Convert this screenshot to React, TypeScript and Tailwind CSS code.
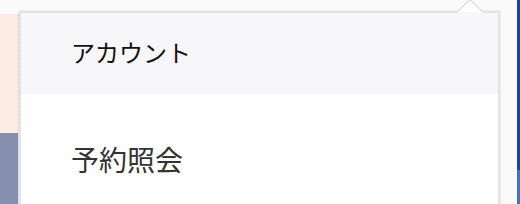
import React from 'react';

const menuItems = ['予約照会'];

export default function App() {
    return (
        <div
            className="relative w-[520px] h-[204px] overflow-hidden bg-[#fafafa]"
            style={{ fontFamily: '"Noto Sans CJK JP", "Noto Sans", sans-serif' }}
        >
            {/* page behind the dropdown */}
            <div className="flex h-full pt-[14px]">
                <div className="flex flex-col w-[19px] border-r border-dotted border-[#e6d8d0]">
                    <div className="h-[119px] bg-[#fcece4]" />
                    <div className="flex-1 bg-[#8890b0]" />
                </div>
                <div className="flex-1" />
                <div className="flex flex-col w-[3px] -mt-[14px]">
                    <div className="flex-1 bg-[#1446b2]" />
                    <div className="h-[34px] bg-[#3f74c2]" />
                </div>
            </div>

            {/* dropdown */}
            <div className="absolute left-[19px] top-[11px] w-[481px] h-[210px] bg-white border-2 border-[#e2e3e6] shadow-[0_0_3px_rgba(0,0,0,0.12)]">
                <div className="flex items-center h-[81px] pb-[4px] pl-[50px] bg-[#f7f7f9] text-[24px] text-[#111]">
                    アカウント
                </div>
                {menuItems.map((item) => (
                    <div key={item} className="flex items-center h-[134px] pb-[4px] pl-[50px] text-[28px] text-[#333]">
                        {item}
                    </div>
                ))}
            </div>

            {/* caret */}
            <svg className="absolute left-[456px] top-0" width="28" height="14" viewBox="0 0 28 14">
                <path d="M0 13 L14 -0.5 L28 13" fill="#ffffff" stroke="#dcdde0" strokeWidth="1.2" />
                <rect x="1" y="12" width="26" height="3" fill="#f7f7f9" />
            </svg>
        </div>
    );
}
